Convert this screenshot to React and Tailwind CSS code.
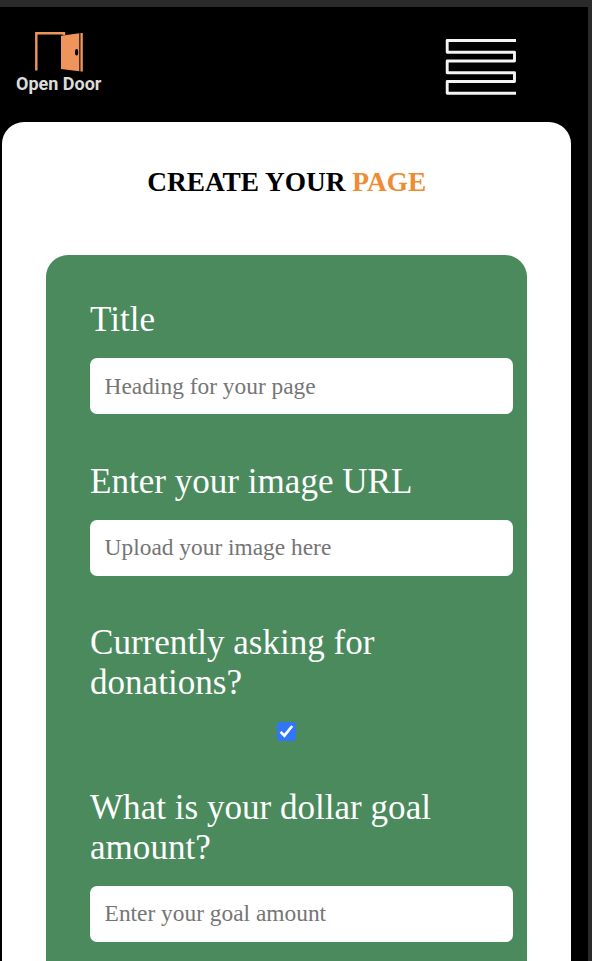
function Logo() {
  return (
    <div className="flex w-[86px] flex-col">
      <svg className="ml-[19px] h-10 w-[50px]" viewBox="0 0 50 40">
        <path d="M1.3 38.5V1.3H29V3" fill="none" stroke="#ef955c" strokeWidth="2.4" />
        <path d="M26 3.7 44.3 1.3V39.3L26 37Z" fill="#ef955c" />
        <path d="M45.4 1H47.8V39.5H45.4Z" fill="#ef955c" />
        <ellipse cx="41.6" cy="20.3" rx="1.6" ry="3.2" fill="#000" />
      </svg>
      <span className="mt-[2px] whitespace-nowrap font-['Roboto',sans-serif] text-[18px] font-bold leading-5 text-[#dcdcdc]">
        Open Door
      </span>
    </div>
  );
}

function MenuButton() {
  return (
    <button type="button" aria-label="Menu" className="block h-[58px] w-[74px]">
      <svg className="h-[58px] w-[74px]" viewBox="0 0 74 58" fill="none" stroke="#f4f4f4" strokeWidth="2.9" strokeLinejoin="round">
        <path d="M72 2.5H3.2V14.2H70.5V23H3.2V34.8H70.5V43.5H3.2V55.2H72" />
      </svg>
    </button>
  );
}

function Field({ label, placeholder }) {
  return (
    <label className="flex flex-col gap-[18px]">
      <span className="text-[35.1px] leading-10 text-white">{label}</span>
      <input
        type="text"
        placeholder={placeholder}
        className="h-14 w-[423px] rounded-[7px] bg-white px-[14.6px] text-[23.4px] outline-none placeholder:text-[#757575]"
      />
    </label>
  );
}

function DonationToggle() {
  return (
    <label className="flex flex-col">
      <span className="w-[393px] text-[35.1px] leading-10 text-white">Currently asking for donations?</span>
      <span className="mt-[19px] ml-[187px] flex h-[19px] w-[19px] items-center justify-center rounded-[3px] bg-[#3176f6]">
        <input type="checkbox" defaultChecked className="sr-only" />
        <svg className="h-[19px] w-[19px]" viewBox="0 0 19 19" fill="none" stroke="#fff" strokeWidth="2.7">
          <path d="M3.6 9.9 7.4 13.7 15.2 4" />
        </svg>
      </span>
    </label>
  );
}

export default function App() {
  return (
    <div className="h-[961px] w-[592px] overflow-hidden bg-[#2a2a2a] pt-[7px] font-['Liberation_Serif','Times_New_Roman',serif]">
      <div className="h-[954px] w-[588px] bg-black">
        <header className="flex h-[115px] items-start justify-between pt-[25px] pr-[70px] pl-4">
          <Logo />
          <div className="pt-[6px]">
            <MenuButton />
          </div>
        </header>
        <main className="ml-[2px] h-[839px] w-[569.4px] rounded-t-[22px] bg-white pt-[45px]">
          <h1 className="text-center text-[27.35px] font-bold leading-[30px] text-black">
            CREATE YOUR <span className="text-[#ef8b33]">PAGE</span>
          </h1>
          <form className="mt-[58.4px] ml-11 flex h-[705.6px] w-[481.4px] flex-col rounded-t-[22px] bg-[#4a8a5c] pt-[45px] pl-11">
            <Field label="Title" placeholder="Heading for your page" />
            <div className="mt-[47.5px]">
              <Field label="Enter your image URL" placeholder="Upload your image here" />
            </div>
            <div className="mt-[47px]">
              <DonationToggle />
            </div>
            <div className="mt-[47px] w-[393px]">
              <Field label="What is your dollar goal amount?" placeholder="Enter your goal amount" />
            </div>
          </form>
        </main>
      </div>
    </div>
  );
}
